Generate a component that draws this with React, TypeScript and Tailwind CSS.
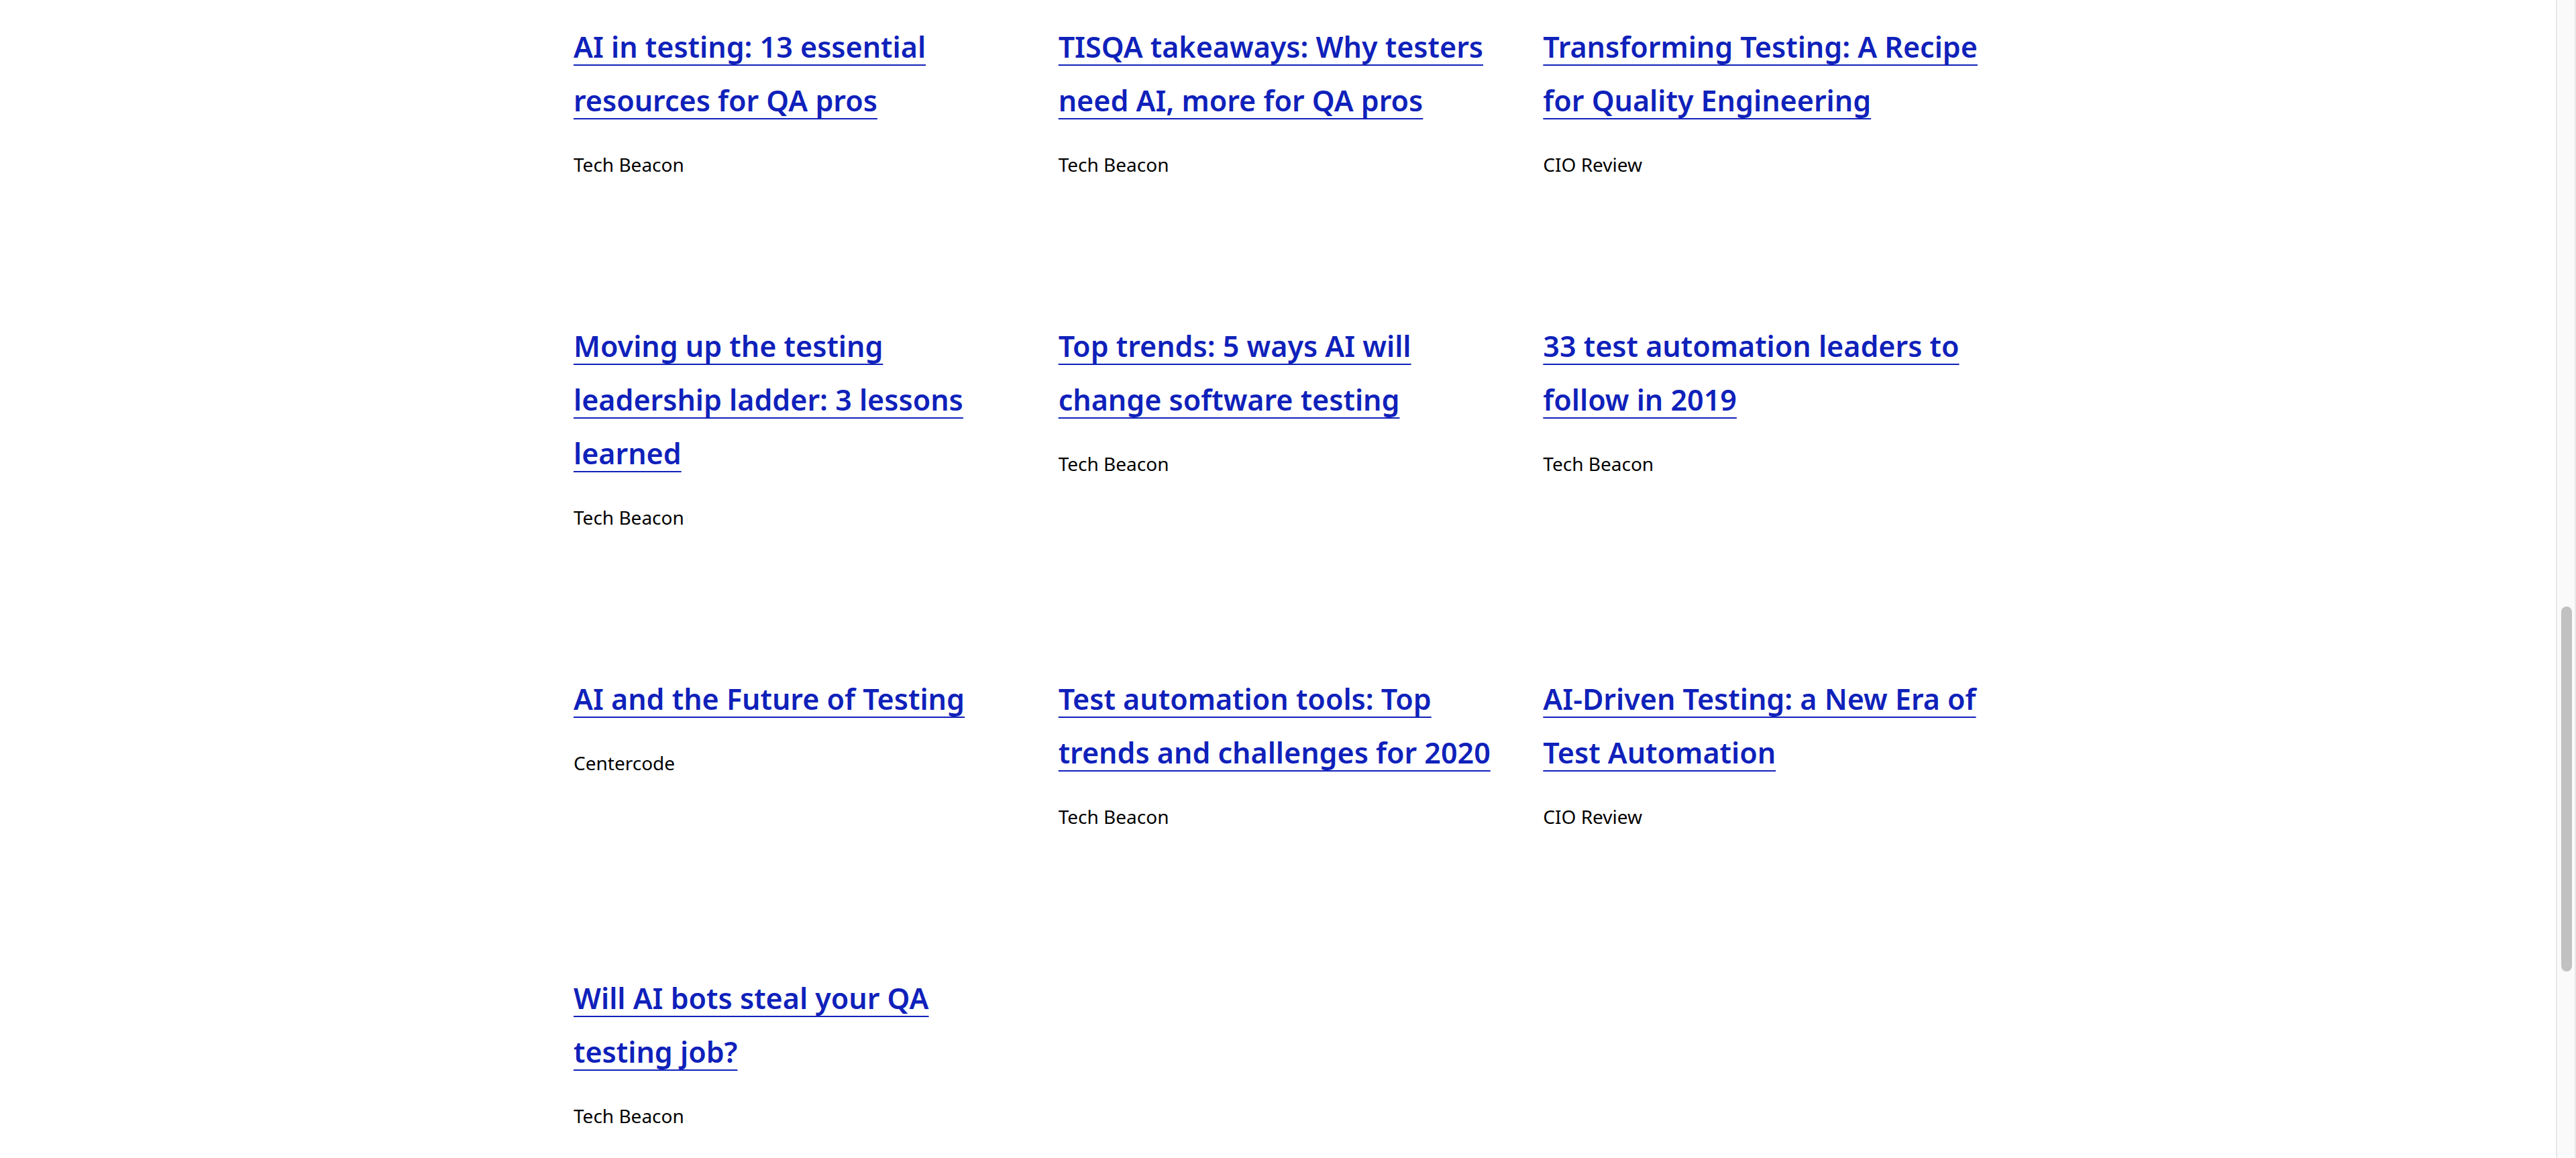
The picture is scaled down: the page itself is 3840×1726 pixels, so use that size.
type Article = { title: string; source: string };

const articles: Article[] = [
  { title: "AI in testing: 13 essential resources for QA pros", source: "Tech Beacon" },
  { title: "TISQA takeaways: Why testers need AI, more for QA pros", source: "Tech Beacon" },
  { title: "Transforming Testing: A Recipe for Quality Engineering", source: "CIO Review" },
  { title: "Moving up the testing leadership ladder: 3 lessons learned", source: "Tech Beacon" },
  { title: "Top trends: 5 ways AI will change software testing", source: "Tech Beacon" },
  { title: "33 test automation leaders to follow in 2019", source: "Tech Beacon" },
  { title: "AI and the Future of Testing", source: "Centercode" },
  { title: "Test automation tools: Top trends and challenges for 2020", source: "Tech Beacon" },
  { title: "AI-Driven Testing: a New Era of Test Automation", source: "CIO Review" },
  { title: "Will AI bots steal your QA testing job?", source: "Tech Beacon" },
];

function ArticleCard({ title, source }: Article) {
  return (
    <article className="px-[34px]">
      <h3 className="text-[43px] leading-[80px] font-semibold">
        <a
          href="#"
          className="text-[#0f21ba] underline decoration-2 underline-offset-10 [text-decoration-skip-ink:none]"
        >
          {title}
        </a>
      </h3>
      <p className="mt-[31px] text-[28px] leading-12 text-black">{source}</p>
    </article>
  );
}

function ScrollTrack() {
  return (
    <div
      aria-hidden="true"
      className="sticky top-0 flex h-screen w-[30px] shrink-0 flex-col items-end border-x-2 border-[#e8e8e8] bg-[#fafafa] pr-1"
    >
      <div className="grow-904" />
      <div className="w-4 grow-544 rounded-full bg-[#c1c1c1]" />
      <div className="grow-278" />
    </div>
  );
}

export default function App() {
  return (
    <div className="flex min-h-screen bg-white font-['Noto_Sans',sans-serif]">
      <main className="min-w-0 flex-1">
        <section className="mx-auto grid max-w-[2168px] grid-cols-3 gap-y-[207px] pt-[30px]">
          {articles.map((article) => (
            <ArticleCard key={article.title} {...article} />
          ))}
        </section>
      </main>
      <ScrollTrack />
    </div>
  );
}
